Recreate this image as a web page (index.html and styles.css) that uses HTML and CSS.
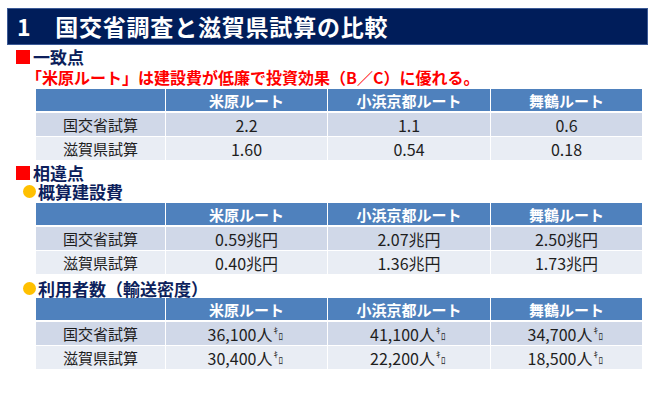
FILE: index.html
```html
<!DOCTYPE html>
<html lang="ja">
<head>
<meta charset="utf-8">
<link rel="stylesheet" href="styles.css">
</head>
<body>
<div class="page">
  <div class="title">1　国交省調査と滋賀県試算の比較</div>

  <div class="sec"><span class="sq"></span>一致点</div>
  <div class="lead">「米原ルート」は建設費が低廉で投資効果（B／C）に優れる。</div>
  <div class="tbl t1">
    <div class="h"></div><div class="h">米原ルート</div><div class="h">小浜京都ルート</div><div class="h">舞鶴ルート</div>
    <div class="r1 lbl">国交省試算</div><div class="r1">2.2</div><div class="r1">1.1</div><div class="r1">0.6</div>
    <div class="r2 lbl">滋賀県試算</div><div class="r2">1.60</div><div class="r2">0.54</div><div class="r2">0.18</div>
  </div>

  <div class="sec sec2"><span class="sq"></span>相違点</div>
  <div class="sub"><span class="dot"></span>概算建設費</div>
  <div class="tbl t2">
    <div class="h"></div><div class="h">米原ルート</div><div class="h">小浜京都ルート</div><div class="h">舞鶴ルート</div>
    <div class="r1 lbl">国交省試算</div><div class="r1">0.59兆円</div><div class="r1">2.07兆円</div><div class="r1">2.50兆円</div>
    <div class="r2 lbl">滋賀県試算</div><div class="r2">0.40兆円</div><div class="r2">1.36兆円</div><div class="r2">1.73兆円</div>
  </div>

  <div class="sub sub2"><span class="dot"></span>利用者数（輸送密度）</div>
  <div class="tbl t3">
    <div class="h"></div><div class="h">米原ルート</div><div class="h">小浜京都ルート</div><div class="h">舞鶴ルート</div>
    <div class="r1 lbl">国交省試算</div><div class="r1">36,100人<span class="km"><span class="k">ｷ</span><span class="ro">ﾛ</span></span></div><div class="r1">41,100人<span class="km"><span class="k">ｷ</span><span class="ro">ﾛ</span></span></div><div class="r1">34,700人<span class="km"><span class="k">ｷ</span><span class="ro">ﾛ</span></span></div>
    <div class="r2 lbl">滋賀県試算</div><div class="r2">30,400人<span class="km"><span class="k">ｷ</span><span class="ro">ﾛ</span></span></div><div class="r2">22,200人<span class="km"><span class="k">ｷ</span><span class="ro">ﾛ</span></span></div><div class="r2">18,500人<span class="km"><span class="k">ｷ</span><span class="ro">ﾛ</span></span></div>
  </div>
</div>
</body>
</html>
```

FILE: styles.css
```css
html, body {
  margin: 0;
  padding: 0;
  background: #ffffff;
}
body {
  font-family: "Noto Sans CJK JP", "Noto Sans", sans-serif;
  width: 657px;
  height: 400px;
  overflow: hidden;
}
.page {
  padding-top: 8px;
}
.title {
  margin: 0 9px 0 7px;
  height: 37px;
  background: #001d5a;
  border: 1px solid #3c5a96;
  box-sizing: border-box;
  color: #ffffff;
  font-weight: 700;
  font-size: 23px;
  line-height: 35px;
  padding-left: 9px;
  letter-spacing: 0.8px;
}
.sec {
  display: flex;
  align-items: center;
  margin-left: 16px;
  height: 21px;
  margin-top: 1px;
  color: #0d1f5c;
  font-weight: 700;
  font-size: 17px;
  line-height: 21px;
}
.sq {
  width: 14px;
  height: 14px;
  background: #ff0000;
  margin-right: 3px;
}
.lead {
  margin-left: 26px;
  color: #ff0000;
  font-weight: 700;
  font-size: 16px;
  line-height: 20px;
  height: 20px;
}
.tbl {
  display: grid;
  grid-template-columns: 129px 161px 162px 151px;
  grid-template-rows: 23px 23px 23px;
  column-gap: 1px;
  row-gap: 1px;
  margin-left: 36px;
  width: 606px;
  margin-top: 2px;
}
.tbl > div {
  display: flex;
  align-items: center;
  justify-content: center;
  font-size: 16px;
  color: #1e1e1e;
  line-height: 1;
}
.tbl > .lbl {
  font-size: 15px;
}
.tbl .h {
  background: #4f81bd;
  color: #ffffff;
  font-weight: 700;
  font-size: 15px;
  margin-bottom: 1px;
}
.tbl .r1 {
  background: #d0d8e8;
}
.tbl .r2 {
  background: #e9edf4;
}
.sec2 {
  margin-top: 3px;
  height: 19px;
}
.sub {
  display: flex;
  align-items: center;
  margin-left: 23px;
  height: 19px;
  color: #0d1f5c;
  font-weight: 700;
  font-size: 17px;
  line-height: 19px;
}
.dot {
  width: 13px;
  height: 13px;
  border-radius: 50%;
  background: #ffc000;
  margin-right: 2px;
}
.sub2 {
  margin-top: 5px;
}
.t3 {
  margin-top: 0;
}
.km {
  display: inline-block;
  font-size: 9px;
  line-height: 1;
  height: 15px;
  margin-left: 1px;
  position: relative;
  width: 12px;
}
.km .k {
  position: absolute;
  left: 0;
  top: 0;
}
.km .ro {
  position: absolute;
  left: 5px;
  top: 6px;
}
```
